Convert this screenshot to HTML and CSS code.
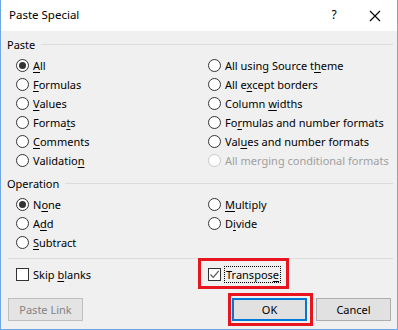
FILE: index.html
```html
<!DOCTYPE html>
<html lang="en">
<head>
    <meta charset="UTF-8" />
    <title>Paste Special</title>
    <link rel="stylesheet" href="styles.css">
</head>
<body>
<div class="dialog">
    <div class="titlebar">
        <span class="title">Paste Special</span>
        <span class="help">?</span>
        <span class="close">
            <svg width="12" height="12" viewBox="0 0 12 12"><path d="M1 1L11 11M11 1L1 11" stroke="#000" stroke-width="1.1" fill="none"/></svg>
        </span>
    </div>

    <div class="content">
        <div class="group-title"><span>Paste</span><div class="line"></div></div>
        <div class="options">
            <div class="opt"><span class="radio checked"></span><span><u>A</u>ll</span></div>
            <div class="opt"><span class="radio"></span><span>All using Source t<u>h</u>eme</span></div>
            <div class="opt"><span class="radio"></span><span><u>F</u>ormulas</span></div>
            <div class="opt"><span class="radio"></span><span>All e<u>x</u>cept borders</span></div>
            <div class="opt"><span class="radio"></span><span><u>V</u>alues</span></div>
            <div class="opt"><span class="radio"></span><span>Column <u>w</u>idths</span></div>
            <div class="opt"><span class="radio"></span><span>Forma<u>t</u>s</span></div>
            <div class="opt"><span class="radio"></span><span>Fo<u>r</u>mulas and number formats</span></div>
            <div class="opt"><span class="radio"></span><span><u>C</u>omments</span></div>
            <div class="opt"><span class="radio"></span><span>Val<u>u</u>es and number formats</span></div>
            <div class="opt"><span class="radio"></span><span>Validatio<u>n</u></span></div>
            <div class="opt disabled"><span class="radio"></span><span>All merging conditional formats</span></div>
        </div>

        <div class="group-title op"><span>Operation</span><div class="line"></div></div>
        <div class="options">
            <div class="opt"><span class="radio checked"></span><span>N<u>o</u>ne</span></div>
            <div class="opt"><span class="radio"></span><span><u>M</u>ultiply</span></div>
            <div class="opt"><span class="radio"></span><span>A<u>d</u>d</span></div>
            <div class="opt"><span class="radio"></span><span>D<u>i</u>vide</span></div>
            <div class="opt"><span class="radio"></span><span><u>S</u>ubtract</span></div>
        </div>

        <div class="separator"></div>

        <div class="options checks">
            <div class="opt"><span class="checkbox"></span><span>Skip <u>b</u>lanks</span></div>
            <div class="opt">
                <span class="checkbox">
                    <svg width="11" height="11" viewBox="0 0 11 11"><path d="M1.5 5.5L4.2 8.3L9.8 1.8" stroke="#555" stroke-width="1.2" fill="none"/></svg>
                </span>
                <span class="focus">Transpos<u>e</u></span>
            </div>
        </div>

        <div class="buttons">
            <button class="btn" disabled>Paste Link</button>
            <div class="spacer"></div>
            <button class="btn default">OK</button>
            <button class="btn">Cancel</button>
        </div>
    </div>

    <!-- red highlight annotations -->
    <div class="mark mark-transpose"></div>
    <div class="mark mark-ok"></div>
</div>
</body>
</html>
```

FILE: styles.css
```css
body {
    margin: 0;
    font-family: "Noto Sans", "DejaVu Sans", sans-serif;
    font-size: 11px;
    color: #000;
    background: #fff;
}
.dialog {
    position: relative;
    width: 398px;
    height: 330px;
    box-sizing: border-box;
    border: 1px solid #6ea7e2;
    border-top: none;
    background-color: #f0f0f0;
}
.titlebar {
    height: 31px;
    background-color: #fff;
    display: flex;
    align-items: center;
    padding-left: 8px;
}
.title {
    flex: 1;
    font-size: 11.5px;
    margin-top: -2px;
}
.help {
    width: 20px;
    text-align: center;
    font-size: 12px;
    margin-right: 25px;
    margin-top: -2px;
}
.close {
    width: 12px;
    margin-right: 16px;
    display: flex;
}
.content {
    padding: 4px 4px 0 6px;
}
.group-title {
    display: flex;
    align-items: center;
    height: 18px;
}
.group-title span {
    margin-right: 6px;
}
.group-title .line {
    flex: 1;
    height: 1px;
    background-color: #dcdcdc;
}
.group-title.op {
    margin-top: 4px;
}
.options {
    display: grid;
    grid-template-columns: 192px 1fr;
    padding-left: 9px;
    margin-top: 3px;
}
.opt {
    height: 19px;
    display: flex;
    align-items: center;
    white-space: nowrap;
}
.opt u {
    text-decoration-thickness: 1px;
    text-underline-offset: 2px;
}
.radio {
    width: 13px;
    height: 13px;
    box-sizing: border-box;
    border: 1px solid #333;
    border-radius: 50%;
    background-color: #fff;
    margin-right: 4px;
    display: flex;
    align-items: center;
    justify-content: center;
}
.radio.checked::after {
    content: "";
    width: 7px;
    height: 7px;
    border-radius: 50%;
    background-color: #333;
}
.disabled {
    color: #a0a0a0;
}
.disabled .radio {
    border-color: #c8c8c8;
}
.separator {
    height: 1px;
    background-color: #dcdcdc;
    margin: 6px 0 0 1px;
}
.checks {
    margin-top: 6px;
}
.checkbox {
    width: 13px;
    height: 13px;
    box-sizing: border-box;
    border: 1px solid #333;
    background-color: #fff;
    margin-right: 4px;
    display: flex;
    align-items: center;
    justify-content: center;
}
.focus {
    outline: 1px dotted #000;
    outline-offset: 0;
    padding: 0 1px;
}
.buttons {
    display: flex;
    margin-top: 14px;
    margin-left: 1px;
    margin-right: 2px;
}
.spacer {
    flex: 1;
}
.btn {
    width: 75px;
    height: 23px;
    font-family: inherit;
    font-size: 11px;
    background-color: #e1e1e1;
    border: 1px solid #adadad;
    color: #000;
    padding: 0;
    margin-left: 9px;
}
.btn:first-child {
    margin-left: 0;
}
.btn:disabled {
    color: #838383;
    border-color: #bfbfbf;
    background-color: #e4e4e4;
}
.btn.default {
    border: 2px solid #0078d7;
}
.mark {
    position: absolute;
    border: 3px solid #e8141e;
    box-sizing: border-box;
}
.mark-transpose {
    left: 197px;
    top: 258px;
    width: 91px;
    height: 31px;
}
.mark-ok {
    left: 227px;
    top: 293px;
    width: 85px;
    height: 33px;
}
```
